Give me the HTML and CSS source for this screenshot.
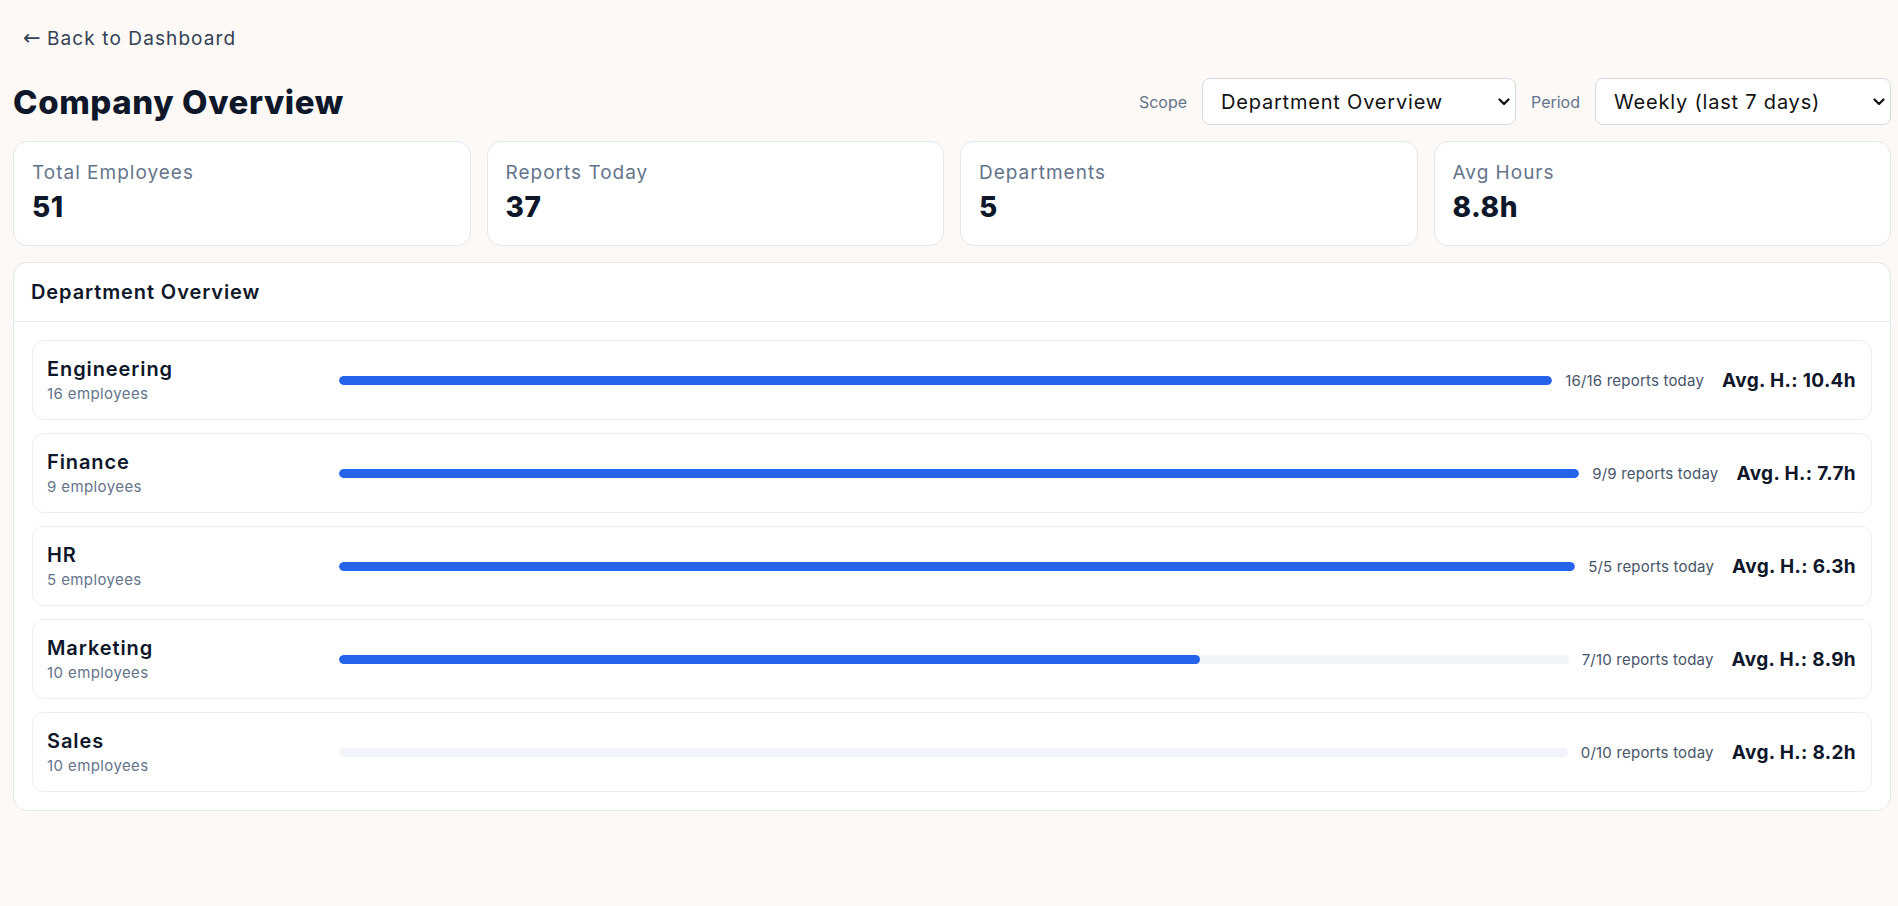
FILE: index.html
```html
<!DOCTYPE html>
<html lang="en">
<head>
<meta charset="utf-8">
<title>Company Overview</title>
<link rel="stylesheet" href="styles.css">
</head>
<body>
<div class="page">
  <a class="back" href="#"><span class="back-arrow">←</span> Back to Dashboard</a>

  <div class="header">
    <h1 class="title">Company Overview</h1>
    <div class="filters">
      <label class="filter-label" for="scope">Scope</label>
      <div class="select-wrap select-scope">
        <select id="scope" class="select">
          <option>Department Overview</option>
          <option>Company</option>
        </select>
        <svg class="chev" viewBox="0 0 12 8" width="12" height="8"><path d="M1.5 1.5 L6 6 L10.5 1.5" fill="none" stroke="#111" stroke-width="2.2" stroke-linecap="round" stroke-linejoin="round"/></svg>
      </div>
      <label class="filter-label" for="period">Period</label>
      <div class="select-wrap select-period">
        <select id="period" class="select">
          <option>Weekly (last 7 days)</option>
          <option>Monthly</option>
        </select>
        <svg class="chev" viewBox="0 0 12 8" width="12" height="8"><path d="M1.5 1.5 L6 6 L10.5 1.5" fill="none" stroke="#111" stroke-width="2.2" stroke-linecap="round" stroke-linejoin="round"/></svg>
      </div>
    </div>
  </div>

  <div class="stats">
    <div class="stat">
      <div class="stat-label">Total Employees</div>
      <div class="stat-value">51</div>
    </div>
    <div class="stat">
      <div class="stat-label">Reports Today</div>
      <div class="stat-value">37</div>
    </div>
    <div class="stat">
      <div class="stat-label">Departments</div>
      <div class="stat-value">5</div>
    </div>
    <div class="stat">
      <div class="stat-label">Avg Hours</div>
      <div class="stat-value">8.8h</div>
    </div>
  </div>

  <div class="panel">
    <div class="panel-head">Department Overview</div>
    <div class="panel-body">
      <div class="dept">
        <div class="dept-info">
          <div class="dept-name">Engineering</div>
          <div class="dept-sub">16 employees</div>
        </div>
        <div class="track"><div class="fill" style="width:100%"></div></div>
        <div class="dept-reports">16/16 reports today</div>
        <div class="dept-avg">Avg. H.: 10.4h</div>
      </div>
      <div class="dept">
        <div class="dept-info">
          <div class="dept-name">Finance</div>
          <div class="dept-sub">9 employees</div>
        </div>
        <div class="track"><div class="fill" style="width:100%"></div></div>
        <div class="dept-reports">9/9 reports today</div>
        <div class="dept-avg">Avg. H.: 7.7h</div>
      </div>
      <div class="dept">
        <div class="dept-info">
          <div class="dept-name">HR</div>
          <div class="dept-sub">5 employees</div>
        </div>
        <div class="track"><div class="fill" style="width:100%"></div></div>
        <div class="dept-reports">5/5 reports today</div>
        <div class="dept-avg">Avg. H.: 6.3h</div>
      </div>
      <div class="dept">
        <div class="dept-info">
          <div class="dept-name">Marketing</div>
          <div class="dept-sub">10 employees</div>
        </div>
        <div class="track"><div class="fill" style="width:70%"></div></div>
        <div class="dept-reports">7/10 reports today</div>
        <div class="dept-avg">Avg. H.: 8.9h</div>
      </div>
      <div class="dept">
        <div class="dept-info">
          <div class="dept-name">Sales</div>
          <div class="dept-sub">10 employees</div>
        </div>
        <div class="track"><div class="fill" style="width:0%"></div></div>
        <div class="dept-reports">0/10 reports today</div>
        <div class="dept-avg">Avg. H.: 8.2h</div>
      </div>
    </div>
  </div>
</div>
</body>
</html>
```

FILE: styles.css
```css
* { box-sizing: border-box; }

html, body {
  margin: 0;
  padding: 0;
  background: #fcf9f6;
}

body {
  font-family: Inter, "Noto Sans", "DejaVu Sans", sans-serif;
  color: #0f172a;
}

.page {
  padding: 27px 7px 40px 13px;
}

.back {
  display: inline-block;
  height: 24px;
  margin-left: 10px;
  font-size: 19px;
  line-height: 24px;
  color: #334155;
  text-decoration: none;
  letter-spacing: 1.1px;
}

.back-arrow {
  font-family: "DejaVu Sans", sans-serif;
  font-size: 21px;
  line-height: 1;
  letter-spacing: 0;
}

.header {
  margin-top: 27px;
  height: 47px;
  display: flex;
  align-items: center;
  justify-content: space-between;
}

.title {
  margin: 0;
  font-size: 33px;
  font-weight: 800;
  line-height: 40px;
  color: #0f172a;
  letter-spacing: 0.6px;
}

.filters {
  display: flex;
  align-items: center;
  gap: 15px;
}

.filter-label {
  font-size: 16px;
  color: #64748b;
}

.select-wrap {
  position: relative;
  height: 47px;
}

.select-scope { width: 314px; }
.select-period { width: 296px; }

.select {
  appearance: none;
  -webkit-appearance: none;
  width: 100%;
  height: 47px;
  padding: 0 36px 0 18px;
  border: 1px solid #d6d9de;
  border-radius: 8px;
  background: #ffffff;
  font-family: Inter, "Noto Sans", sans-serif;
  font-size: 20px;
  color: #111111;
  letter-spacing: 0.8px;
}

.chev {
  position: absolute;
  right: 6px;
  top: 20px;
  pointer-events: none;
}

.stats {
  margin-top: 16px;
  display: grid;
  grid-template-columns: repeat(4, 1fr);
  gap: 16px;
}

.stat {
  background: #ffffff;
  border: 1px solid #e5e7eb;
  border-radius: 14px;
  padding: 20px 18px 20px;
  height: 105px;
}

.stat-label {
  font-size: 19px;
  line-height: 22px;
  color: #64748b;
  letter-spacing: 1px;
}

.stat-value {
  margin-top: 6px;
  font-size: 28px;
  line-height: 34px;
  font-weight: 800;
  color: #0f172a;
  letter-spacing: 0.5px;
}

.panel {
  margin-top: 16px;
  background: #ffffff;
  border: 1px solid #e5e7eb;
  border-radius: 14px;
}

.panel-head {
  padding: 18px 17px;
  font-size: 20px;
  line-height: 22px;
  font-weight: 600;
  color: #0f172a;
  letter-spacing: 0.9px;
  border-bottom: 1px solid #e5e7eb;
}

.panel-body {
  padding: 18px;
  display: flex;
  flex-direction: column;
  gap: 13px;
}

.dept {
  display: flex;
  align-items: center;
  height: 80px;
  padding: 0 15px 0 14px;
  border: 1px solid #eceef1;
  border-radius: 12px;
  background: #ffffff;
}

.dept-info {
  width: 280px;
  flex: none;
}

.dept-name {
  font-size: 20px;
  line-height: 24px;
  font-weight: 600;
  color: #0f172a;
  letter-spacing: 0.9px;
}

.dept-sub {
  margin-top: 3px;
  font-size: 15px;
  line-height: 20px;
  color: #64748b;
  letter-spacing: 0.4px;
}

.track {
  flex: 1;
  margin-left: 12px;
  height: 9px;
  border-radius: 5px;
  background: #f1f4f8;
  overflow: hidden;
}

.fill {
  height: 100%;
  border-radius: 5px;
  background: #2563eb;
}

.dept-reports {
  margin-left: 13px;
  font-size: 15px;
  color: #475569;
  letter-spacing: 0.2px;
  white-space: nowrap;
}

.dept-avg {
  margin-left: 18px;
  font-size: 19px;
  font-weight: 700;
  color: #0f172a;
  letter-spacing: 0.35px;
  white-space: nowrap;
}
```
